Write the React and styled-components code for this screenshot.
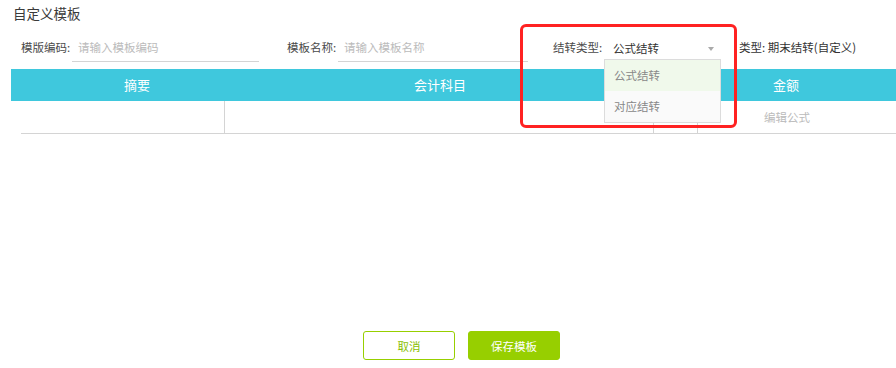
import React from "react";
import styled, { createGlobalStyle } from "styled-components";

const Global = createGlobalStyle`
  html, body { margin: 0; padding: 0; background: #fff; }
  body {
    width: 896px; height: 368px; overflow: hidden;
    font-family: "Noto Sans CJK SC", "Noto Sans", sans-serif;
    color: #333;
  }
  * { box-sizing: border-box; }
`;

const Page = styled.div`
  position: relative;
  width: 896px;
  height: 368px;
  overflow: hidden;
`;

const Title = styled.div`
  height: 26px;
  line-height: 26px;
  padding-left: 13px;
  font-size: 13.5px;
  color: #3a3a3a;
`;

const FormRow = styled.div`
  display: flex;
  align-items: flex-start;
  padding: 7px 0 0 21px;
  height: 43px;
`;

const Field = styled.div`
  display: flex;
  align-items: center;
  height: 29px;
  margin-right: ${(p) => p.$gap || 0}px;
`;

const Label = styled.span`
  font-size: 11.5px;
  color: #4a4a4a;
  line-height: 29px;
  white-space: nowrap;
  width: ${(p) => p.$w}px;
`;

const Input = styled.div`
  width: ${(p) => p.$w}px;
  height: 29px;
  border-bottom: 1px solid #d4d4d4;
  padding-left: 6px;
  font-size: 11.5px;
  line-height: 28px;
  color: #bbb;
  white-space: nowrap;
`;

const Select = styled.div`
  position: relative;
  width: 116px;
  height: 25px;
  margin-top: 2px;
  padding-left: 9px;
  padding-right: 6px;
  font-size: 11.5px;
  line-height: 25px;
  color: #333;
  display: flex;
  align-items: center;
  justify-content: space-between;
`;

const Arrow = styled.span`
  width: 0;
  height: 0;
  border-left: 3.5px solid transparent;
  border-right: 3.5px solid transparent;
  border-top: 4px solid #aaa;
`;

const Menu = styled.ul`
  position: absolute;
  top: 23px;
  left: 0;
  width: 117px;
  margin: 0;
  padding: 0;
  list-style: none;
  background: #fff;
  border: 1px solid #dcdcdc;
  z-index: 3;
`;

const MenuItem = styled.li`
  height: 31px;
  line-height: 31px;
  padding-left: 9px;
  font-size: 11.5px;
  color: #888;
  background: ${(p) => (p.$active ? "#f0f9eb" : "#fafafa")};
`;

const TypeText = styled.span`
  font-size: 11.5px;
  color: #333;
  line-height: 29px;
  margin-left: 19px;
  white-space: nowrap;
`;

const Table = styled.div`
  margin-left: 11px;
  width: 960px;
`;

const HeadRow = styled.div`
  display: grid;
  grid-template-columns: 252px 354px 80px 178px 96px;
  height: 32px;
  background: #3fc8dd;
`;

const HeadCell = styled.div`
  text-align: center;
  color: #fff;
  font-size: 13px;
  line-height: 32px;
  white-space: nowrap;
`;

const BodyRow = styled.div`
  display: grid;
  grid-template-columns: 204px 429px 44px 178px 96px;
  padding-left: 10px;
  height: 33px;
`;

const BodyCell = styled.div`
  border-bottom: 1px solid #d4d4d4;
  border-right: ${(p) => (p.$line ? "1px solid #d4d4d4" : "none")};
  text-align: center;
  font-size: 11.5px;
  line-height: 32px;
  color: #bbb;
  white-space: nowrap;
`;

const Footer = styled.div`
  display: flex;
  justify-content: center;
  gap: 13px;
  padding-left: 27px;
  margin-top: 197px;
`;

const Button = styled.button`
  width: 92px;
  height: 29px;
  border-radius: 3px;
  font-family: inherit;
  font-size: 11.5px;
  cursor: pointer;
  border: 1px solid #97cf00;
  background: ${(p) => (p.$primary ? "#97cf00" : "#fff")};
  color: ${(p) => (p.$primary ? "#fff" : "#8ac000")};
  padding: 0;
`;

const Annotation = styled.div`
  position: absolute;
  left: 520px;
  top: 24px;
  width: 217px;
  height: 104px;
  border: 3px solid #ff2222;
  border-radius: 6px;
  z-index: 5;
  pointer-events: none;
`;

export default function App() {
  return (
    <Page>
      <Global />
      <Title>自定义模板</Title>
      <FormRow>
        <Field $gap={28}>
          <Label $w={51}>模版编码:</Label>
          <Input $w={187}>请输入模板编码</Input>
        </Field>
        <Field $gap={25}>
          <Label $w={51}>模板名称:</Label>
          <Input $w={190}>请输入模板名称</Input>
        </Field>
        <Field>
          <Label $w={51}>结转类型:</Label>
          <Select>
            <span>公式结转</span>
            <Arrow />
            <Menu>
              <MenuItem $active>公式结转</MenuItem>
              <MenuItem>对应结转</MenuItem>
            </Menu>
          </Select>
          <TypeText>类型: 期末结转(自定义)</TypeText>
        </Field>
      </FormRow>
      <Table>
        <HeadRow>
          <HeadCell>摘要</HeadCell>
          <HeadCell>会计科目</HeadCell>
          <HeadCell />
          <HeadCell>金额</HeadCell>
          <HeadCell />
        </HeadRow>
        <BodyRow>
          <BodyCell $line />
          <BodyCell $line />
          <BodyCell $line />
          <BodyCell>编辑公式</BodyCell>
          <BodyCell />
        </BodyRow>
      </Table>
      <Footer>
        <Button>取消</Button>
        <Button $primary>保存模板</Button>
      </Footer>
      <Annotation />
    </Page>
  );
}
